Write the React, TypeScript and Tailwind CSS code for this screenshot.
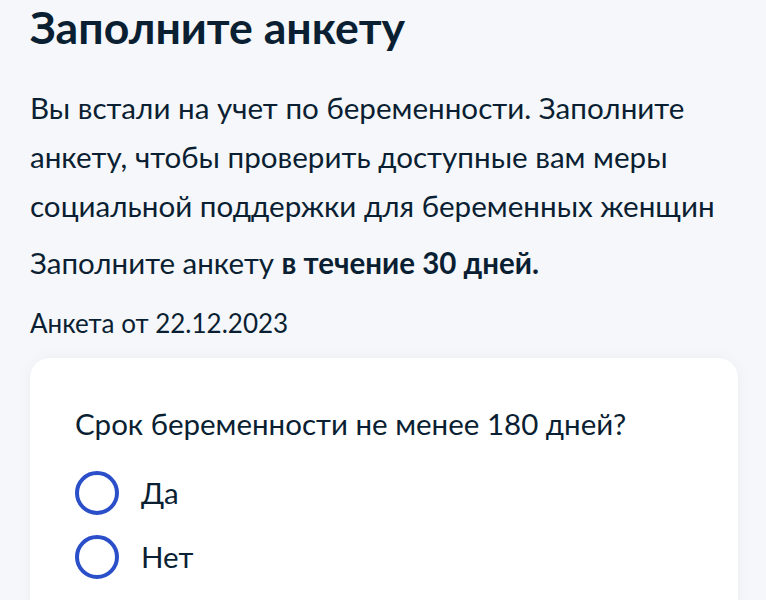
export default function App() {
  return (
    <div
      className="min-h-[600px] w-[766px] overflow-hidden bg-[#f5f7fa] px-[30px] text-[#0b1f33]"
      style={{ fontFamily: 'Lato, "Noto Sans", sans-serif' }}
    >
      <h1 className="text-[44.6px] font-bold leading-[54px]">Заполните анкету</h1>

      <p className="mt-[29px] text-[29.6px] leading-[49px]">
        Вы встали на учет по беременности. Заполните анкету, чтобы проверить доступные вам меры социальной
        поддержки для беременных женщин
      </p>

      <p className="mt-[13px] text-[29.5px] leading-[40px]">
        Заполните анкету <span className="font-bold">в течение 30 дней.</span>
      </p>

      <p className="mt-[22px] text-[26px] leading-[36px]">Анкета от 22.12.2023</p>

      <div className="mt-[17px] w-[708px] rounded-[20px] bg-white px-[45px] pt-[48px] pb-[40px] shadow-[0_0_16px_rgba(11,31,51,0.04)]">
        <p className="text-[29.5px] leading-[36px]">Срок беременности не менее 180 дней?</p>

        <div className="mt-[29px] flex flex-col gap-[20px]">
          {['Да', 'Нет'].map((label) => (
            <label key={label} className="flex items-center gap-[22px]">
              <span className="h-[44px] w-[44px] shrink-0 rounded-full border-[4px] border-[#2b4fc9]" />
              <span className="text-[29.5px] leading-[36px]">{label}</span>
            </label>
          ))}
        </div>
      </div>
    </div>
  )
}
